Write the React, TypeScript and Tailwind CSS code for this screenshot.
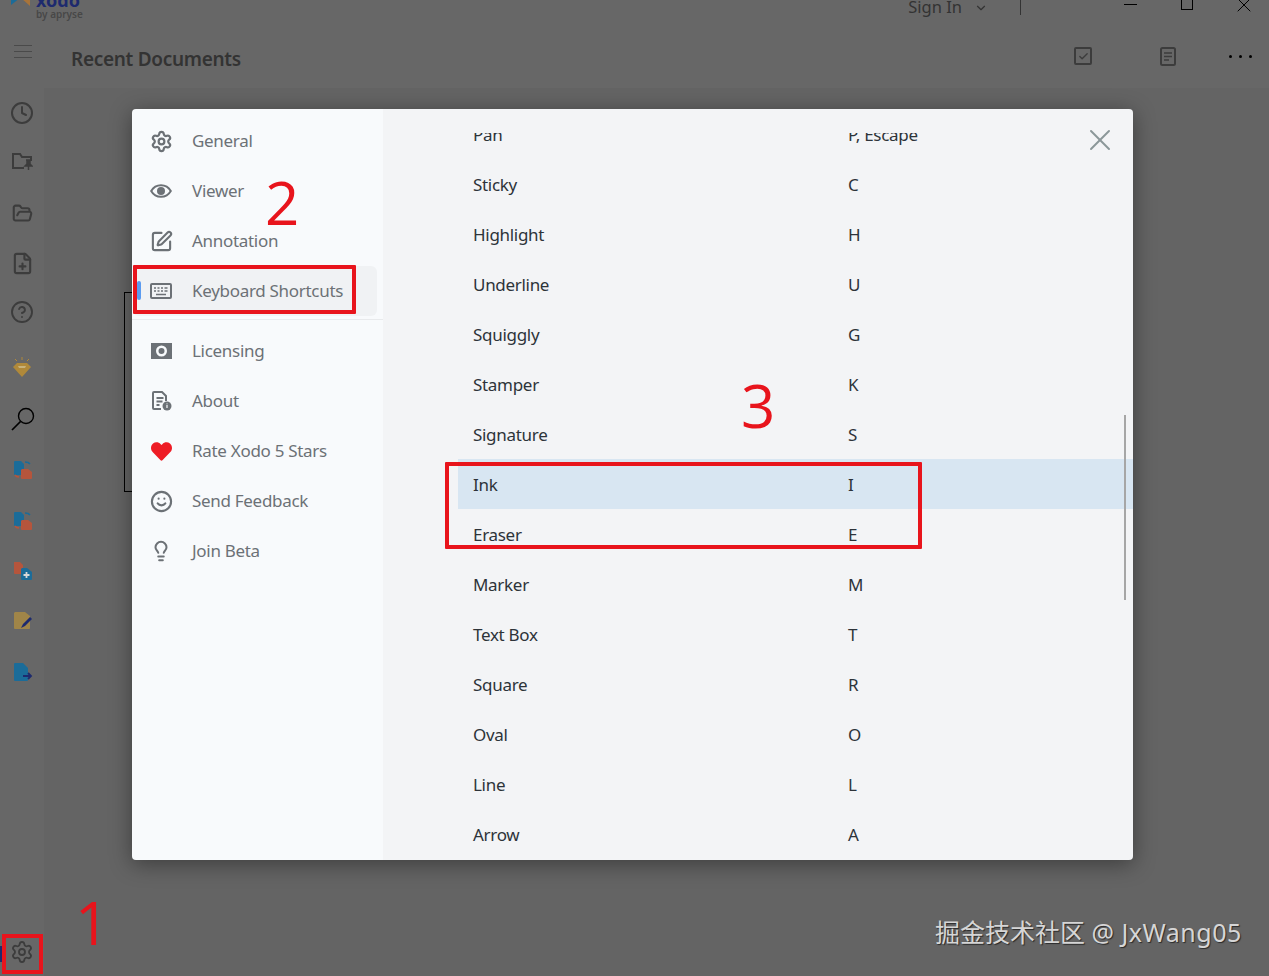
import type { ReactNode } from "react";
import {
  Check,
  ChevronDown,
  CircleHelp,
  Clock,
  FilePlus,
  FolderOpen,
  Lightbulb,
  Settings,
  Smile,
  SquarePen,
  X,
} from "lucide-react";
import { FaHeart } from "react-icons/fa";

const BLUE = "#1b6c99";
const ORANGE = "#b5553c";
const NAVY = "#1d2a6e";
const ICON = "#3c3c3c";
const MENU = "#6c7176";

const TwoDocs = () => (
  <svg width="20" height="20" viewBox="0 0 20 20">
    <path d="M1 2a1 1 0 0 1 1-1h6l3 3v6H8v5H2a1 1 0 0 1-1-1z" fill={BLUE} />
    <path d="M9 9h6l4 3v6a1 1 0 0 1-1 1H9a1 1 0 0 1-1-1v-8z" fill={ORANGE} />
    <path d="M12 2c2 0 4 .5 5 2" stroke={BLUE} strokeWidth="1.500" fill="none" />
    <path d="M2 15c1 1.500 3 2 4 2" stroke={ORANGE} strokeWidth="1.500" fill="none" />
  </svg>
);

const AddDoc = () => (
  <svg width="20" height="20" viewBox="0 0 20 20">
    <path d="M1 1h6l3 3v6H8v3H2a1 1 0 0 1-1-1z" fill={ORANGE} />
    <path d="M9 7h5l5 4v7a1 1 0 0 1-1 1H9a1 1 0 0 1-1-1V8z" fill={BLUE} />
    <path d="M13.500 11v6M10.500 14h6" stroke="#d8d8d8" strokeWidth="1.800" />
  </svg>
);

const NoteDoc = () => (
  <svg width="20" height="20" viewBox="0 0 20 20">
    <path d="M2 1h10l5 4v12a1 1 0 0 1-1 1H2a1 1 0 0 1-1-1V2z" fill="#a08548" />
    <path d="M8 17l2-4 7-7 2 2-7 7z" fill={NAVY} />
  </svg>
);

const ExportDoc = () => (
  <svg width="20" height="20" viewBox="0 0 20 20">
    <path d="M1 2a1 1 0 0 1 1-1h8l5 5v12a1 1 0 0 1-1 1H2a1 1 0 0 1-1-1z" fill={BLUE} />
    <path d="M10 14h8M15 11l3 3-3 3" stroke={NAVY} strokeWidth="1.800" fill="none" />
  </svg>
);

const railIcons: { key: string; className: string; icon: ReactNode }[] = [
  { key: "recent", className: "", icon: <Clock size={24} strokeWidth={2} color={ICON} /> },
  {
    key: "pinned",
    className: "-mt-px",
    icon: (
      <svg width="22" height="20" viewBox="0 0 22 20" fill="none" stroke={ICON} strokeWidth="2">
        <path d="M13 16H2V2h7l2 3h9v4" />
        <path d="M15 8h5M16 8v4l-2 2h7l-2-2V8M17.500 14v4" strokeWidth="1.500" fill={ICON} />
      </svg>
    ),
  },
  { key: "open", className: "mt-px", icon: <FolderOpen size={21} strokeWidth={2.400} color={ICON} /> },
  { key: "new", className: "", icon: <FilePlus size={23} strokeWidth={2.200} color={ICON} /> },
  { key: "help", className: "-mt-px", icon: <CircleHelp size={24} strokeWidth={1.900} color={ICON} /> },
  {
    key: "gem",
    className: "mt-[6px]",
    icon: (
      <svg width="20" height="22" viewBox="0 0 20 22">
        <path d="M5 6h10l4 4-9 10-9-10z" fill="#b0893a" />
        <path d="M6 9h8l-1 2H7z" fill="#c8b27c" />
        <path d="M10 0v3M3 2l2 2M17 2l-2 2" stroke="#b0893a" strokeWidth="1" />
      </svg>
    ),
  },
  {
    key: "search",
    className: "mt-px pl-[2px]",
    icon: (
      <svg width="26" height="26" viewBox="0 0 26 26" fill="none" stroke="#000" strokeWidth="1.400">
        <circle cx="16" cy="10" r="7.500" />
        <path d="M10.500 15.500 2 24" strokeWidth="1.700" />
      </svg>
    ),
  },
  { key: "compare", className: "mt-px pl-[2px]", icon: <TwoDocs /> },
  { key: "merge", className: "mt-px pl-[2px]", icon: <TwoDocs /> },
  { key: "add", className: "pl-[2px]", icon: <AddDoc /> },
  { key: "note", className: "pl-[2px]", icon: <NoteDoc /> },
  { key: "export", className: "mt-px pl-[2px]", icon: <ExportDoc /> },
];

const EyeIcon = () => (
  <svg width="22" height="14" viewBox="0 0 22 14" fill="none">
    <path d="M1.200 7C3.500 3 7 1.200 11 1.200S18.500 3 20.800 7C18.500 11 15 12.800 11 12.800S3.500 11 1.200 7z" stroke={MENU} strokeWidth="2" />
    <circle cx="11" cy="7" r="4" fill={MENU} />
  </svg>
);

const KeyboardIcon = () => (
  <svg width="22" height="16" viewBox="0 0 22 16" fill="none">
    <rect x="1" y="1" width="20" height="14" rx="1" stroke={MENU} strokeWidth="2" />
    <path d="M4 5h2M7.500 5h2M11 5h2M14.500 5h3M4 8h2M7.500 8h2M11 8h2M14.500 8h3M6 11.500h10" stroke={MENU} strokeWidth="1.500" />
  </svg>
);

const LicenseIcon = () => (
  <svg width="21" height="16" viewBox="0 0 21 16">
    <path
      fillRule="evenodd"
      d="M0 0h21v16H0zM10.500 2.500a5.500 5.500 0 1 0 0 11 5.500 5.500 0 0 0 0-11zM10.500 5a3 3 0 1 1 0 6 3 3 0 0 1 0-6z"
      fill={MENU}
    />
  </svg>
);

const AboutIcon = () => (
  <svg width="21" height="20" viewBox="0 0 21 20" fill="none">
    <path d="M10 18H3a1 1 0 0 1-1-1V2a1 1 0 0 1 1-1h8l4 4v5" stroke={MENU} strokeWidth="2" />
    <path d="M5.500 7h7M5.500 10.500h6M5.500 14h3" stroke={MENU} strokeWidth="1.800" />
    <circle cx="16" cy="15" r="4.500" fill={MENU} />
    <path d="M16 14v3M16 12.500v.8" stroke="#f8fafc" strokeWidth="1.200" />
  </svg>
);

const topMenu: { label: string; icon: ReactNode }[] = [
  { label: "General", icon: <Settings size={23} strokeWidth={2.300} /> },
  { label: "Viewer", icon: <EyeIcon /> },
  { label: "Annotation", icon: <SquarePen size={23} strokeWidth={2.200} /> },
  { label: "Keyboard Shortcuts", icon: <KeyboardIcon /> },
];

const bottomMenu: { label: string; icon: ReactNode }[] = [
  { label: "Licensing", icon: <LicenseIcon /> },
  { label: "About", icon: <AboutIcon /> },
  { label: "Rate Xodo 5 Stars", icon: <FaHeart size={21} className="text-[#ee1c25]" /> },
  { label: "Send Feedback", icon: <Smile size={23} strokeWidth={2.200} /> },
  { label: "Join Beta", icon: <Lightbulb size={22} strokeWidth={2.200} /> },
];

const shortcuts = [
  ["Pan", "P, Escape"],
  ["Sticky", "C"],
  ["Highlight", "H"],
  ["Underline", "U"],
  ["Squiggly", "G"],
  ["Stamper", "K"],
  ["Signature", "S"],
  ["Ink", "I"],
  ["Eraser", "E"],
  ["Marker", "M"],
  ["Text Box", "T"],
  ["Square", "R"],
  ["Oval", "O"],
  ["Line", "L"],
  ["Arrow", "A"],
];

const MenuItem = ({ label, icon, active }: { label: string; icon: ReactNode; active?: boolean }) => (
  <div
    className={`relative flex h-[50px] items-center rounded-md text-[#6c7176] ${
      active ? "mx-px w-[244px] bg-[#f0f2f4]" : ""
    }`}
  >
    {active && <span className="absolute left-[4px] top-[15px] h-[19px] w-[4px] rounded bg-[#5b9bf0]" />}
    <span className={`flex w-[24px] justify-center ${active ? "ml-[16px]" : "ml-[17px]"}`}>{icon}</span>
    <span className="ml-[19px] whitespace-nowrap text-[17px] tracking-[-0.3px]">{label}</span>
  </div>
);

export default function App() {
  return (
    <div className="relative h-[976px] w-[1269px] overflow-hidden bg-[#656565] font-['Noto_Sans','Noto_Sans_CJK_SC',sans-serif]">
      {/* app behind the dialog, painted at its dimmed colours */}
      <header className="-mt-[12px] flex h-[40px] items-center bg-[#676767]">
        <svg width="22" height="20" viewBox="0 0 22 20" className="ml-[10px] -translate-y-[9px]">
          <path d="M1 2l9 7-9 7z" fill={BLUE} />
          <path d="M20 1l-9 8 9 8z" fill="#a8743a" />
        </svg>
        <div className="ml-[4px] flex -translate-y-[3px] flex-col items-start leading-none">
          <span className="text-[18px] font-bold leading-[18px] text-[#1d2a6e]">xodo</span>
          <span className="text-[10px] font-semibold text-[#484848]">by apryse</span>
        </div>
        <span className="ml-auto -translate-y-px text-[16.500px] text-[#333]">Sign In</span>
        <ChevronDown size={14} className="ml-[12px] text-[#333]" />
        <span className="ml-[32px] h-[16px] w-px -translate-y-px bg-[#333]" />
        <span className="ml-[103px] h-px w-[13px] -translate-y-[4px] bg-black" />
        <span className="ml-[44px] h-[20px] w-[12px] -translate-y-[8px] border border-black" />
        <X size={24} strokeWidth={1} className="ml-[39px] mr-[13px] -translate-y-[3px] text-black" />
      </header>

      <div className="flex h-[60px] items-center bg-[#676767]">
        <div className="ml-[14px] flex w-[18px] -translate-y-[7px] flex-col gap-[5px]">
          <span className="h-px bg-[#4a4a4a]" />
          <span className="h-px bg-[#4a4a4a]" />
          <span className="h-px bg-[#4a4a4a]" />
        </div>
        <h1 className="ml-[39px] translate-y-px text-[19px] font-semibold tracking-[-0.3px] text-[#333]">Recent Documents</h1>
        <div className="ml-auto flex h-[18px] w-[18px] -translate-y-[2px] items-center justify-center rounded-[2px] border-2 border-[#3c3c3c]">
          <Check size={11} strokeWidth={3} color="#3c3c3c" />
        </div>
        <svg width="16" height="19" viewBox="0 0 16 19" fill="none" stroke="#3c3c3c" className="ml-[68px] -translate-y-[2px]">
          <rect x="1" y="1" width="14" height="17" rx="1.500" strokeWidth="2" />
          <path d="M4 6h8M4 9.500h8M4 13h5" strokeWidth="1.500" />
        </svg>
        <div className="ml-[53px] mr-[17px] flex -translate-y-[2px] gap-[7px]">
          <span className="h-[3px] w-[3px] rounded-full bg-black" />
          <span className="h-[3px] w-[3px] rounded-full bg-black" />
          <span className="h-[3px] w-[3px] rounded-full bg-black" />
        </div>
      </div>

      <div className="flex h-[888px]">
        <nav className="relative flex w-[44px] flex-col items-center bg-[#676767]">
          {railIcons.map((item) => (
            <div key={item.key} className={`flex h-[50px] w-full shrink-0 items-center justify-center ${item.className}`}>
              {item.icon}
            </div>
          ))}
          <div className="mb-[4px] mt-auto flex h-[40px] w-full items-center justify-center">
            <Settings size={24} strokeWidth={1.800} color={ICON} />
          </div>
          <span className="absolute bottom-[14px] left-0 h-[16px] w-[2px] bg-[#1d2a6e]" />
        </nav>
        <main className="flex-1 bg-[#646464]" />
      </div>

      {/* thin outline peeking out from behind the dialog */}
      <div className="absolute left-[124px] top-[292px] h-[200px] w-[20px] border border-black" />

      {/* settings dialog */}
      <div className="absolute left-[132px] top-[109px] flex h-[751px] w-[1001px] overflow-hidden rounded-[4px] shadow-[0_4px_22px_rgba(0,0,0,0.4)]">
        <aside className="w-[251px] shrink-0 bg-[#f8fafc] pt-[7px]">
          {topMenu.map((item) => (
            <MenuItem key={item.label} label={item.label} icon={item.icon} active={item.label === "Keyboard Shortcuts"} />
          ))}
          <div className="mb-[6px] mt-[3px] h-px bg-[#e8eaec]" />
          {bottomMenu.map((item) => (
            <MenuItem key={item.label} label={item.label} icon={item.icon} />
          ))}
        </aside>
        <section className="relative flex-1 bg-[#f3f4f6] pt-[24px]">
          <div className="h-[727px] overflow-hidden">
            <div className="-mt-[24px] pl-[75px]">
              {shortcuts.map(([name, key]) => (
                <div
                  key={name}
                  className={`flex h-[50px] items-center pl-[15px] pt-[2px] text-[17px] tracking-[-0.3px] text-[#2d3339] ${
                    name === "Ink" ? "bg-[#d8e6f2]" : ""
                  }`}
                >
                  <span className="w-[375px]">{name}</span>
                  <span>{key}</span>
                </div>
              ))}
            </div>
          </div>
          <X size={36} strokeWidth={1.300} className="absolute right-[15px] top-[13px] text-[#8b9799]" />
          <div className="absolute right-[7px] top-[306px] h-[185px] w-[2px] bg-[#a6a6a6]" />
        </section>
      </div>

      {/* red annotations drawn over the screenshot */}
      <div className="absolute left-[133px] top-[265px] h-[49px] w-[223px] rounded-[1px] border-[4px] border-[#e8141c]" />
      <div className="absolute left-[445px] top-[462px] h-[87px] w-[477px] rounded-[1px] border-[4px] border-[#e8141c]" />
      <div className="absolute left-[2px] top-[934px] h-[40px] w-[41px] border-[4px] border-[#e8141c]" />
      <span className="absolute left-[265px] top-[172px] font-['Open_Sans',sans-serif] text-[60px] leading-[60px] text-[#e8141c]">2</span>
      <span className="absolute left-[741px] top-[375px] font-['Open_Sans',sans-serif] text-[60px] leading-[60px] text-[#e8141c]">3</span>
      <span className="absolute left-[75px] top-[892px] font-['Open_Sans',sans-serif] text-[60px] leading-[60px] text-[#e8141c]">1</span>

      <span className="absolute left-[935px] top-[914px] whitespace-nowrap text-[25px] leading-[36px] text-[#d6d6d6] [text-shadow:1px_1px_1px_#2a2a2a]">
        掘金技术社区 <span className="tracking-[0.5px]">@ JxWang05</span>
      </span>
    </div>
  );
}
